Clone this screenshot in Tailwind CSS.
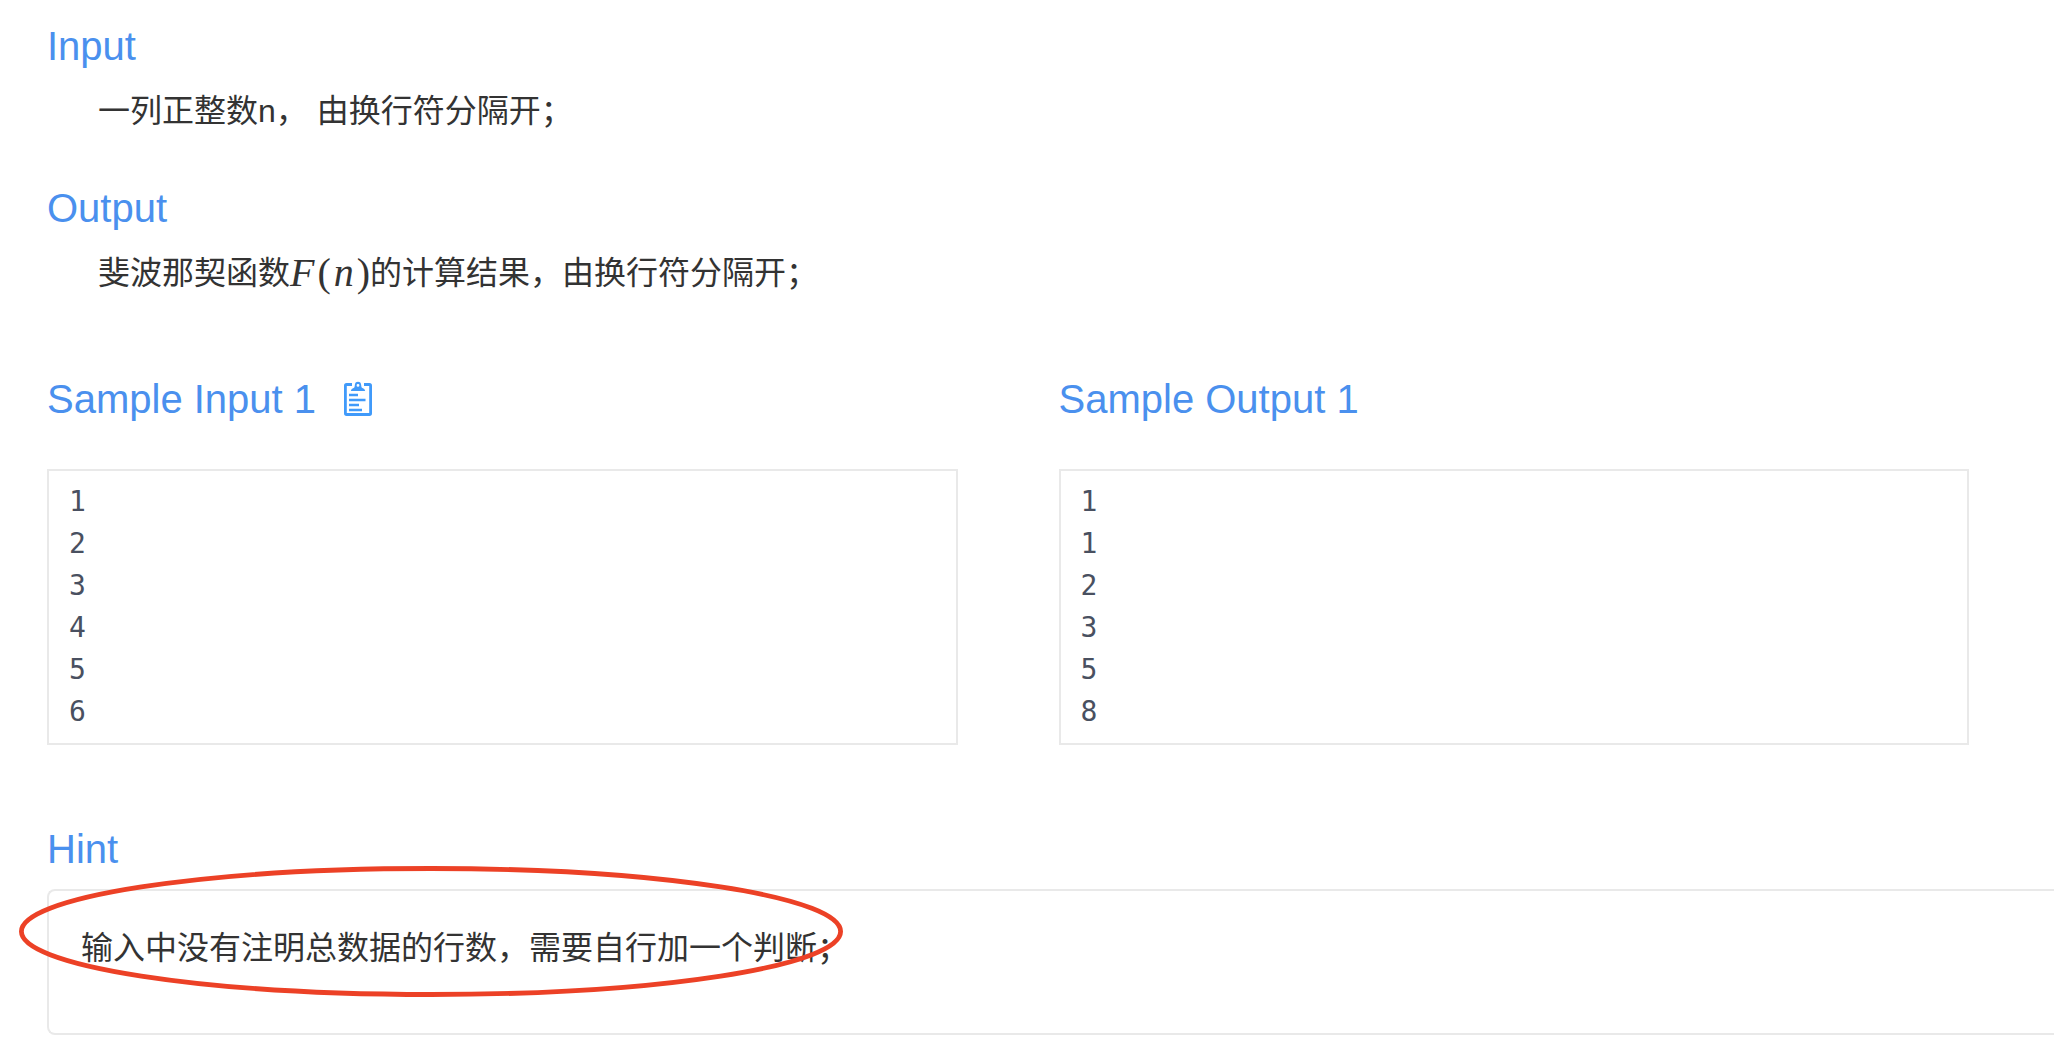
<!DOCTYPE html>
<html lang="zh-CN">
<head>
<meta charset="utf-8">
<meta name="viewport" content="width=device-width, initial-scale=1">
<title>Problem</title>
<script src="https://cdn.jsdelivr.net/npm/@tailwindcss/browser@4"></script>
</head>
<body class="bg-white overflow-x-hidden font-['Liberation_Sans','Noto_Sans_CJK_SC',sans-serif] text-[32px] leading-[48px] text-[#333333]">
<main class="pl-[47px] pt-[22px]">
  <section class="pb-[49px]">
    <h2 class="text-[40px] leading-[48px] text-[#4a90ee]">Input</h2>
    <p class="mt-[17px] h-12 pl-[51px]">一列正整数n， 由换行符分隔开；</p>
  </section>

  <section>
    <h2 class="text-[40px] leading-[48px] text-[#4a90ee]">Output</h2>
    <p class="mt-[17px] flex h-12 pl-[51px]">斐波那契函数<span class="inline-flex gap-[3px] font-['Liberation_Serif',serif] text-[40px]"><i>F</i><span>(</span><i>n</i><span>)</span></span>的计算结果，由换行符分隔开；</p>
  </section>

  <section class="mt-[78px] mr-[85px] grid grid-cols-2 gap-x-[101px]">
    <div>
      <div class="flex items-center gap-7">
        <h2 class="text-[40px] leading-[48px] text-[#4a90ee]">Sample Input 1</h2>
        <button type="button" aria-label="Copy sample input" class="text-[#409afa]">
          <svg class="block h-9 w-7" viewBox="0 0 28 36" fill="none" stroke="currentColor" stroke-width="2.5">
            <path d="M8 3.5H2.5Q1.4 3.5 1.4 4.8V32.2Q1.4 33.5 2.5 33.5H25.5Q26.6 33.5 26.6 32.2V4.8Q26.6 3.5 25.5 3.5H20" stroke-width="2.8"/>
            <path d="M6.8 10Q7.2 7.6 9.6 7Q10.8 6.6 10.8 4.2Q11 .8 14 .8Q17 .8 17.2 4.2Q17.2 6.6 18.4 7Q20.8 7.6 21.2 10ZM14 3A1.4 1.4 0 1 0 14 5.8A1.4 1.4 0 1 0 14 3Z" fill="currentColor" fill-rule="evenodd" stroke="none"/>
            <path d="M5 14H14M5 19H21.5M5 24H15M5 29H18"/>
          </svg>
        </button>
      </div>
      <pre class="mt-[46px] border-2 border-[#e9e9e9] px-5 py-[10px] font-['DejaVu_Sans_Mono',monospace] text-[28px] leading-[42px] text-[#495060]">1
2
3
4
5
6</pre>
    </div>
    <div>
      <h2 class="text-[40px] leading-[48px] text-[#4a90ee]">Sample Output 1</h2>
      <pre class="mt-[46px] border-2 border-[#e9e9e9] px-5 py-[10px] font-['DejaVu_Sans_Mono',monospace] text-[28px] leading-[42px] text-[#495060]">1
1
2
3
5
8</pre>
    </div>
  </section>

  <section class="relative mt-20 pb-[6px]">
    <h2 class="text-[40px] leading-[48px] text-[#4a90ee]">Hint</h2>
    <div class="mt-4 rounded-l-lg border-2 border-r-0 border-[#e9e9e9] px-8 pt-[33px] pb-[61px]">
      <p class="h-12">输入中没有注明总数据的行数，需要自行加一个判断；</p>
    </div>
    <svg class="pointer-events-none absolute top-[41px] -left-7 h-[131px] w-[824px]" viewBox="0 0 824 131" fill="none" aria-hidden="true">
      <ellipse cx="412" cy="65.5" rx="409.6" ry="63" stroke="#ec4126" stroke-width="4.8"/>
    </svg>
  </section>
</main>
</body>
</html>
